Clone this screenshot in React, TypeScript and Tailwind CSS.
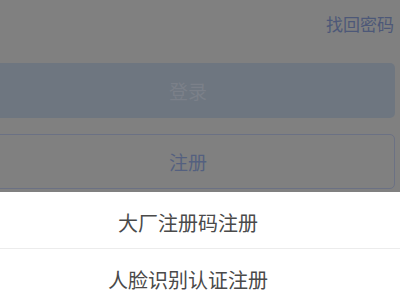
import React from "react";

const font = { fontFamily: '"Noto Sans CJK SC", "Noto Sans", sans-serif' };

const LoginPanel = () => {
  return (
    <div className="flex h-[192px] flex-col bg-[#808080]">
      <div className="flex h-[46px] items-center justify-end pr-[6px]">
        <span className="text-[17px] leading-none text-[#4d5878]">
          找回密码
        </span>
      </div>
      <div className="mt-[17px] -ml-[19px] mr-[5px] flex h-[55px] items-center justify-center rounded-[5px] bg-[#6e7680]">
        <span className="text-[19px] leading-none text-[#7b8089]">登录</span>
      </div>
      <div className="mt-[16px] -ml-[19px] mr-[5px] flex h-[55px] items-center justify-center rounded-[5px] border border-[#6b7184]">
        <span className="text-[19px] leading-none text-[#54607f]">注册</span>
      </div>
    </div>
  );
};

const SheetItem = ({ label, last }: { label: string; last?: boolean }) => (
  <div
    className={`flex h-[57px] items-center justify-center pt-[5px] pr-[24px] ${
      last ? "" : "border-b border-[#ececec]"
    }`}
  >
    <span className="text-[20px] leading-none text-[#4a4a4a]">{label}</span>
  </div>
);

export default function App() {
  return (
    <div className="h-[300px] w-[400px] overflow-hidden bg-white" style={font}>
      <LoginPanel />
      <div className="flex flex-col bg-white">
        <SheetItem label="大厂注册码注册" />
        <SheetItem label="人脸识别认证注册" last />
      </div>
    </div>
  );
}
